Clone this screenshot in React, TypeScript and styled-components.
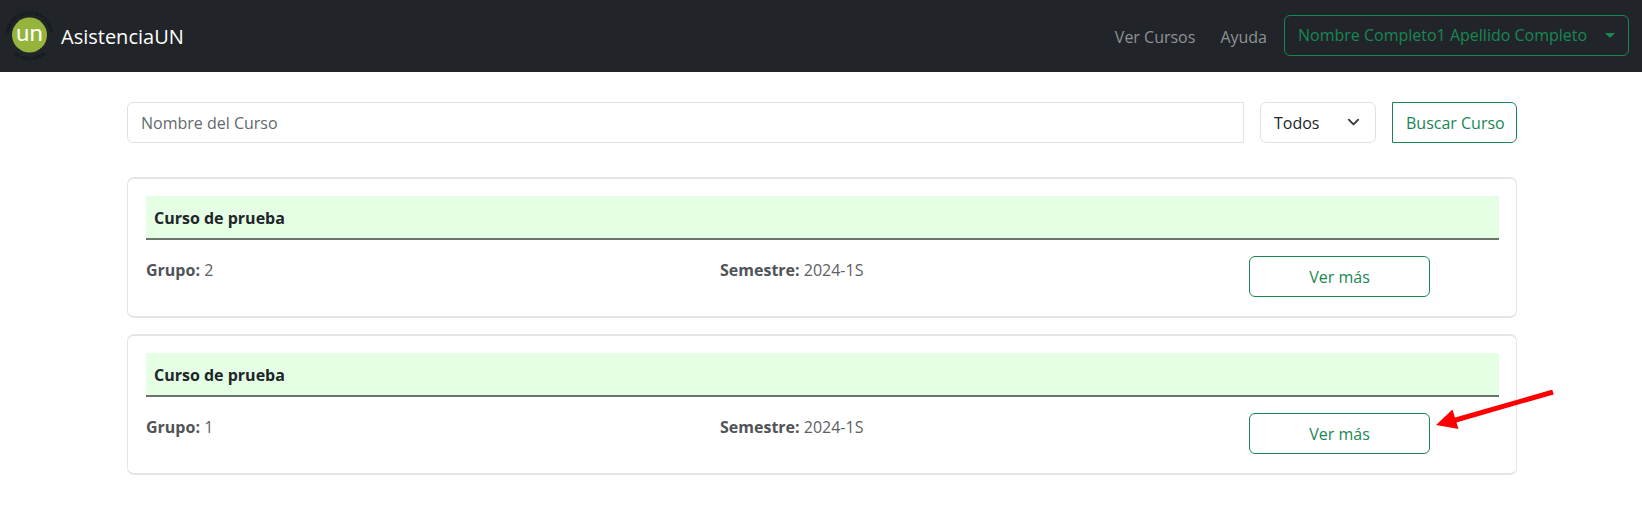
import React from "react";
import styled, { createGlobalStyle } from "styled-components";

const green = "#198754";

const GlobalStyle = createGlobalStyle`
  *, *::before, *::after { box-sizing: border-box; }
  body {
    margin: 0;
    background: #fff;
    color: #212529;
    font-family: "Open Sans", "Segoe UI", sans-serif;
    font-size: 16px;
    line-height: 26px;
  }
  button, input, select { font: inherit; }
`;

const Navbar = styled.header`
  display: flex;
  align-items: center;
  justify-content: space-between;
  min-height: 72px;
  padding: 0 13px 0 3px;
  background: #212529;
`;

const Brand = styled.a`
  display: flex;
  align-items: center;
  gap: 4px;
  color: #fff;
  font-size: 20px;
  line-height: 30px;
  text-decoration: none;
`;

const BrandName = styled.span`
  padding-top: 2px;
`;

const LogoMark = styled.svg`
  display: block;
  width: 54px;
  height: 54px;
`;

const Nav = styled.nav`
  display: flex;
  align-items: center;
  gap: 25px;
`;

const NavLink = styled.a`
  padding-top: 2px;
  color: #909294;
  text-decoration: none;
`;

const OutlineButton = styled.button<{ $width?: string; $squareLeft?: boolean }>`
  width: ${(p) => p.$width ?? "auto"};
  height: 41px;
  padding: 0 13px;
  border: 1px solid ${green};
  border-radius: ${(p) => (p.$squareLeft ? "0 6px 6px 0" : "6px")};
  background: transparent;
  color: ${green};
  white-space: nowrap;
  cursor: pointer;
`;

const UserButton = styled(OutlineButton)`
  display: flex;
  align-items: center;
  justify-content: space-between;
  margin: 0 0 2px -8px;
`;

const Caret = styled.span`
  border: 5px solid transparent;
  border-top-color: ${green};
  border-bottom: 0;
`;

const Main = styled.main`
  padding: 30px 125px 39px 127px;
`;

const SearchForm = styled.form`
  display: flex;
  gap: 16px;
  margin-bottom: 34px;
`;

const SearchInput = styled.input`
  flex: 1;
  min-width: 0;
  height: 41px;
  padding: 0 13px;
  border: 1px solid #dee2e6;
  border-radius: 6px 0 0 6px;
  background: #fff;
  color: #212529;
  &::placeholder { color: #63686d; opacity: 1; }
`;

const SelectWrap = styled.div`
  position: relative;
  width: 116px;
`;

const Select = styled.select`
  width: 100%;
  height: 41px;
  padding: 0 13px;
  border: 1px solid #dee2e6;
  border-radius: 6px;
  background: #fff;
  color: #212529;
  appearance: none;
`;

const Chevron = styled.svg`
  position: absolute;
  top: 13px;
  right: 15px;
  width: 15px;
  height: 15px;
  pointer-events: none;
`;

const CourseList = styled.div`
  display: flex;
  flex-direction: column;
  gap: 16px;
`;

const Card = styled.article`
  padding: 17px 17px 19px 18px;
  border: solid #e5e5e5;
  border-width: 2px 1px;
  border-radius: 7px;
`;

const CourseTitle = styled.h2`
  margin: 0 0 16px;
  padding: 9px 8px 7px;
  border-bottom: 2px solid #6c756c;
  background: #e5ffe5;
  font-size: 16px;
  line-height: 26px;
  font-weight: 700;
`;

const Details = styled.div`
  display: grid;
  grid-template-columns: 574fr 529fr 250fr;
  align-items: start;
`;

const Fact = styled.p`
  margin: 0;
  padding-top: 1px;
  color: #5d6064;
  b { color: #505357; }
`;

const Action = styled.div`
  position: relative;
  width: 181px;
`;

const Arrow = styled.svg`
  position: absolute;
  top: -23px;
  left: 186px;
  width: 120px;
  height: 42px;
  pointer-events: none;
`;

const courses = [
  { name: "Curso de prueba", group: 2, term: "2024-1S", marked: false },
  { name: "Curso de prueba", group: 1, term: "2024-1S", marked: true },
];

function Logo() {
  return (
    <LogoMark viewBox="0 0 54 54" aria-hidden="true">
      <path id="seal" d="M8.500 36A20.500 20.500 0 1 1 44.500 36" fill="none" />
      <path id="sealBase" d="M3 28A23.500 23.500 0 0 0 50 28" fill="none" />
      <g fill="#11151a" fontFamily="Liberation Sans, sans-serif" fontSize="5" fontWeight="700">
        <text textAnchor="middle">
          <textPath href="#seal" startOffset="50%">UNIVERSIDAD NACIONAL</textPath>
        </text>
        <text textAnchor="middle">
          <textPath href="#sealBase" startOffset="50%">DE COLOMBIA</textPath>
        </text>
      </g>
      <circle cx="26.500" cy="26" r="17.500" fill="#94b43b" />
      <text x="26.500" y="31.500" textAnchor="middle" fill="#fff" fontFamily="Lato, sans-serif" fontSize="24">
        un
      </text>
    </LogoMark>
  );
}

export default function App() {
  return (
    <>
      <GlobalStyle />
      <Navbar>
        <Brand href="#">
          <Logo />
          <BrandName>AsistenciaUN</BrandName>
        </Brand>
        <Nav>
          <NavLink href="#cursos">Ver Cursos</NavLink>
          <NavLink href="#ayuda">Ayuda</NavLink>
          <UserButton type="button" $width="345px">
            Nombre Completo1 Apellido Completo
            <Caret />
          </UserButton>
        </Nav>
      </Navbar>
      <Main>
        <SearchForm onSubmit={(e) => e.preventDefault()}>
          <SearchInput type="text" placeholder="Nombre del Curso" aria-label="Nombre del Curso" />
          <SelectWrap>
            <Select aria-label="Semestre" defaultValue="Todos">
              <option>Todos</option>
              <option>2024-1S</option>
            </Select>
            <Chevron viewBox="0 0 16 16" aria-hidden="true">
              <path d="m3 5 5 5 5-5" fill="none" stroke="#343a40" strokeWidth="2" strokeLinecap="round" strokeLinejoin="round" />
            </Chevron>
          </SelectWrap>
          <OutlineButton type="submit" $width="125px" $squareLeft>
            Buscar Curso
          </OutlineButton>
        </SearchForm>
        <CourseList>
          {courses.map((c) => (
            <Card key={c.group}>
              <CourseTitle>{c.name}</CourseTitle>
              <Details>
                <Fact>
                  <b>Grupo:</b> {c.group}
                </Fact>
                <Fact>
                  <b>Semestre:</b> {c.term}
                </Fact>
                <Action>
                  <OutlineButton type="button" $width="100%">
                    Ver más
                  </OutlineButton>
                  {c.marked && (
                    <Arrow viewBox="0 0 120 42" aria-hidden="true">
                      <path d="M118 2 19 30.500" stroke="#f00" strokeWidth="5" />
                      <path d="M1 35 17.500 19.500 23.500 39Z" fill="#f00" />
                    </Arrow>
                  )}
                </Action>
              </Details>
            </Card>
          ))}
        </CourseList>
      </Main>
    </>
  );
}
